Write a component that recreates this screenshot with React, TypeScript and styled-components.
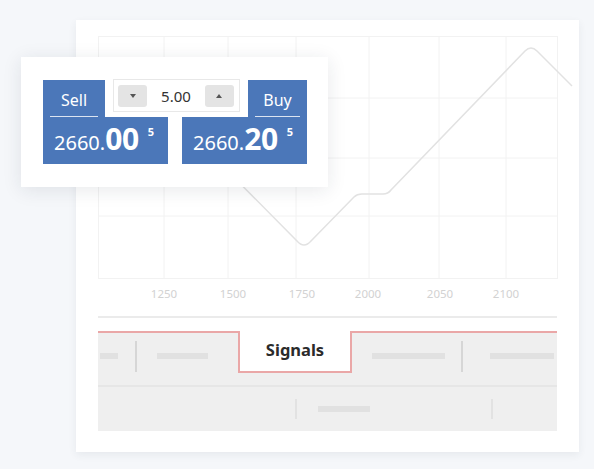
import React from "react";
import styled, { createGlobalStyle } from "styled-components";

const Global = createGlobalStyle`
  html, body { margin: 0; padding: 0; background: #f5f7fa; }
  body { font-family: "Noto Sans", "Open Sans", sans-serif; width: 594px; height: 469px; overflow: hidden; }
  #root { position: relative; width: 594px; height: 469px; }
`;

const BLUE = "#4b77b9";
const RED = "#eaa7a7";

const Page = styled.div`
  position: relative;
  width: 594px;
  height: 469px;
  padding: 20px 0 0 76px;
  box-sizing: border-box;
`;

const Card = styled.div`
  width: 503px;
  height: 432px;
  box-sizing: border-box;
  background: #ffffff;
  padding: 16px 22px 21px 22px;
  box-shadow: 0 3px 8px rgba(40, 50, 70, 0.07);
  display: flex;
  flex-direction: column;
`;

const ChartArea = styled.div`
  height: 280px;
  border-bottom: 2px solid #ebebeb;
`;

const ChartSvg = styled.svg`
  display: block;
  overflow: visible;
`;

const AxisText = styled.text`
  font-family: "Noto Sans", "Open Sans", sans-serif;
  font-size: 11.5px;
  fill: #d2d2d2;
`;

const TabBar = styled.div`
  margin-top: 13px;
  height: 55px;
  background: #efefef;
  display: flex;
  align-items: flex-start;
`;

const Segment = styled.div<{ $w?: number }>`
  ${(p) => (p.$w ? `width: ${p.$w}px;` : "flex: 1;")}
  height: 100%;
  box-sizing: border-box;
  border-top: 2px solid ${RED};
  display: flex;
  align-items: center;
  padding-bottom: 6px;
`;

const ActiveTab = styled.div`
  width: 114px;
  height: 42px;
  box-sizing: border-box;
  background: #ffffff;
  border: 2px solid ${RED};
  border-top: none;
  display: flex;
  align-items: center;
  justify-content: center;
  font-weight: 700;
  font-size: 16.5px;
  color: #2b2b2b;
  padding-bottom: 3px;
`;

const Bar = styled.div<{ $w: number; $ml: number }>`
  width: ${(p) => p.$w}px;
  margin-left: ${(p) => p.$ml}px;
  height: 6px;
  background: #e1e1e1;
  flex: none;
`;

const Sep = styled.div<{ $ml: number; $h: number; $c?: string }>`
  width: 2px;
  height: ${(p) => p.$h}px;
  margin-left: ${(p) => p.$ml}px;
  background: ${(p) => p.$c || "#d6d6d6"};
  flex: none;
`;

const SubRow = styled.div`
  height: 46px;
  box-sizing: border-box;
  background: #efefef;
  border-top: 2px solid #e6e6e6;
  display: flex;
  align-items: center;
`;

/* Trading widget */
const Widget = styled.div`
  position: absolute;
  left: 21px;
  top: 57px;
  width: 307px;
  box-sizing: border-box;
  padding: 23px 21px 23px 22px;
  background: #ffffff;
  box-shadow: 0 3px 18px rgba(30, 40, 60, 0.1);
  display: flex;
  flex-direction: column;
`;

const TopRow = styled.div`
  display: flex;
  align-items: flex-start;
  gap: 8px;
`;

const SideTab = styled.div<{ $w: number }>`
  width: ${(p) => p.$w}px;
  height: 37px;
  box-sizing: border-box;
  background: ${BLUE};
  display: flex;
  align-items: flex-end;
  padding: 0 7px 0 7px;
`;

const TabLabel = styled.div`
  width: 100%;
  text-align: center;
  color: #ffffff;
  font-size: 16px;
  line-height: 20px;
  padding-bottom: 6px;
  border-bottom: 1.5px solid rgba(255, 255, 255, 0.8);
`;

const Qty = styled.div`
  width: 127px;
  height: 33px;
  margin-top: -1px;
  box-sizing: border-box;
  border: 1px solid #e8e8e8;
  background: #ffffff;
  display: flex;
  align-items: center;
  justify-content: space-between;
  padding: 0 5px 0 4px;
`;

const StepBtn = styled.div`
  width: 29px;
  height: 22px;
  border-radius: 3px;
  background: #e4e4e4;
  display: flex;
  align-items: center;
  justify-content: center;
`;

const QtyValue = styled.span`
  font-size: 15px;
  color: #333333;
`;

const BottomRow = styled.div`
  display: flex;
  gap: 14px;
`;

const PriceBox = styled.div`
  width: 125px;
  height: 47px;
  box-sizing: border-box;
  background: ${BLUE};
  color: #ffffff;
  display: flex;
  align-items: baseline;
  padding: 7px 0 0 11px;
  line-height: 30px;
`;

const PriceMain = styled.span`
  font-size: 20px;
`;

const PriceBig = styled.span`
  font-size: 30px;
  font-weight: 700;
  letter-spacing: -0.3px;
`;

const PriceSup = styled.span`
  font-size: 11px;
  font-weight: 700;
  margin-left: 9px;
  position: relative;
  top: -14px;
`;

const Caret = ({ up }: { up?: boolean }) => (
  <svg width="6" height="4" viewBox="0 0 6 4">
    {up ? <path d="M0 4 L3 0 L6 4 Z" fill="#555" /> : <path d="M0 0 L6 0 L3 4 Z" fill="#555" />}
  </svg>
);

const vLines = [0.5, 66, 130, 198, 271, 341, 408, 459.5];
const hLines = [0.5, 62, 122, 180, 242.5];
const labels: [string, number][] = [
  ["1250", 66],
  ["1500", 135],
  ["1750", 204],
  ["2000", 270],
  ["2050", 342],
  ["2100", 408],
];

export default function App() {
  return (
    <>
      <Global />
      <Page>
        <Card>
          <ChartArea>
            <ChartSvg width="459" height="280" viewBox="0 0 459 280">
              {vLines.map((x) => (
                <line key={"v" + x} x1={x} y1={0} x2={x} y2={243} stroke="#f2f2f2" strokeWidth="1" />
              ))}
              {hLines.map((y) => (
                <line key={"h" + y} x1={0} y1={y} x2={459} y2={y} stroke="#f2f2f2" strokeWidth="1" />
              ))}
              <path
                d="M102,107 L199,205 Q206,213 213,205 L256,161 Q259,158 264,158 L285,158 Q290,158 293,154 L427,15 Q433,9 439,15 L474,50"
                fill="none"
                stroke="#e2e2e2"
                strokeWidth="1.5"
              />
              {labels.map(([t, x]) => (
                <AxisText key={t} x={x} y={262} textAnchor="middle">
                  {t}
                </AxisText>
              ))}
            </ChartSvg>
          </ChartArea>
          <TabBar>
            <Segment $w={140}>
              <Bar $w={18} $ml={2} />
              <Sep $ml={17} $h={31} />
              <Bar $w={51} $ml={20} />
            </Segment>
            <ActiveTab>Signals</ActiveTab>
            <Segment>
              <Bar $w={73} $ml={20} />
              <Sep $ml={16} $h={31} />
              <Bar $w={64} $ml={27} />
            </Segment>
          </TabBar>
          <SubRow>
            <Sep $ml={197} $h={20} $c="#e2e2e2" />
            <Bar $w={52} $ml={21} />
            <Sep $ml={121} $h={20} $c="#e2e2e2" />
          </SubRow>
        </Card>
        <Widget>
          <TopRow>
            <SideTab $w={62}>
              <TabLabel>Sell</TabLabel>
            </SideTab>
            <Qty>
              <StepBtn>
                <Caret />
              </StepBtn>
              <QtyValue>5.00</QtyValue>
              <StepBtn>
                <Caret up />
              </StepBtn>
            </Qty>
            <SideTab $w={59}>
              <TabLabel>Buy</TabLabel>
            </SideTab>
          </TopRow>
          <BottomRow>
            <PriceBox>
              <PriceMain>2660.</PriceMain>
              <PriceBig>00</PriceBig>
              <PriceSup>5</PriceSup>
            </PriceBox>
            <PriceBox>
              <PriceMain>2660.</PriceMain>
              <PriceBig>20</PriceBig>
              <PriceSup>5</PriceSup>
            </PriceBox>
          </BottomRow>
        </Widget>
      </Page>
    </>
  );
}
